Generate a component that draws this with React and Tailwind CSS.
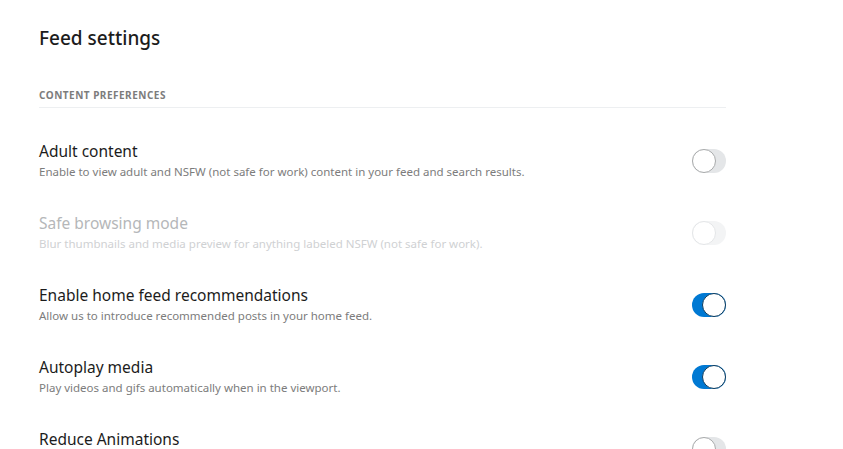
import { useState } from 'react';

const rows = [
  {
    title: 'Adult content',
    desc: 'Enable to view adult and NSFW (not safe for work) content in your feed and search results.',
    on: false,
  },
  {
    title: 'Safe browsing mode',
    desc: 'Blur thumbnails and media preview for anything labeled NSFW (not safe for work).',
    on: false,
    disabled: true,
  },
  {
    title: 'Enable home feed recommendations',
    desc: 'Allow us to introduce recommended posts in your home feed.',
    on: true,
  },
  {
    title: 'Autoplay media',
    desc: 'Play videos and gifs automatically when in the viewport.',
    on: true,
  },
  {
    title: 'Reduce Animations',
    desc: 'Reduce animations on posts, comments, and feeds.',
    on: false,
  },
];

function Toggle({ on, disabled, onClick }) {
  return (
    <button
      onClick={onClick}
      disabled={disabled}
      className={`relative h-[24px] w-[34px] shrink-0 rounded-full ${
        on ? 'bg-[#0079d3]' : disabled ? 'bg-[#f3f4f5]' : 'bg-[#e4e6e8]'
      }`}
    >
      <span
        className={`absolute top-0 h-[24px] w-[24px] rounded-full border-[1.5px] bg-white ${
          on ? 'left-[10px] border-[#0c3a5c]' : disabled ? 'left-0 border-[#e4e6e8]' : 'left-0 border-[#a8aaab]'
        }`}
      />
    </button>
  );
}

export default function App() {
  const [state, setState] = useState(rows.map((r) => r.on));

  return (
    <div className="min-h-screen bg-white px-[39px] font-['Noto_Sans',sans-serif]">
      <div className="w-[687px]">
        <h1 className="pt-[26px] text-[19px] leading-[24px] font-medium text-[#1c1c1c]">Feed settings</h1>

        {/* Section header */}
        <div className="mt-[39px] border-b border-[#edeff1] pb-[6px] text-[10px] leading-[12px] font-bold tracking-[0.5px] text-[#7c7c7c]">
          CONTENT PREFERENCES
        </div>

        <div className="mt-[33px] flex flex-col gap-[33px]">
          {rows.map((row, i) => (
            <div key={row.title} className="flex items-center justify-between">
              <div>
                <div
                  className={`text-[15.5px] leading-[20px] font-normal ${
                    row.disabled ? 'text-[#b5b7b9]' : 'text-[#1c1c1c]'
                  }`}
                >
                  {row.title}
                </div>
                <div
                  className={`mt-[3px] text-[11.5px] leading-[16px] ${
                    row.disabled ? 'text-[#cfd1d3]' : 'text-[#7c7c7c]'
                  }`}
                >
                  {row.desc}
                </div>
              </div>
              <Toggle
                on={state[i]}
                disabled={row.disabled}
                onClick={() => setState((s) => s.map((v, j) => (j === i ? !v : v)))}
              />
            </div>
          ))}
        </div>
      </div>
    </div>
  );
}
